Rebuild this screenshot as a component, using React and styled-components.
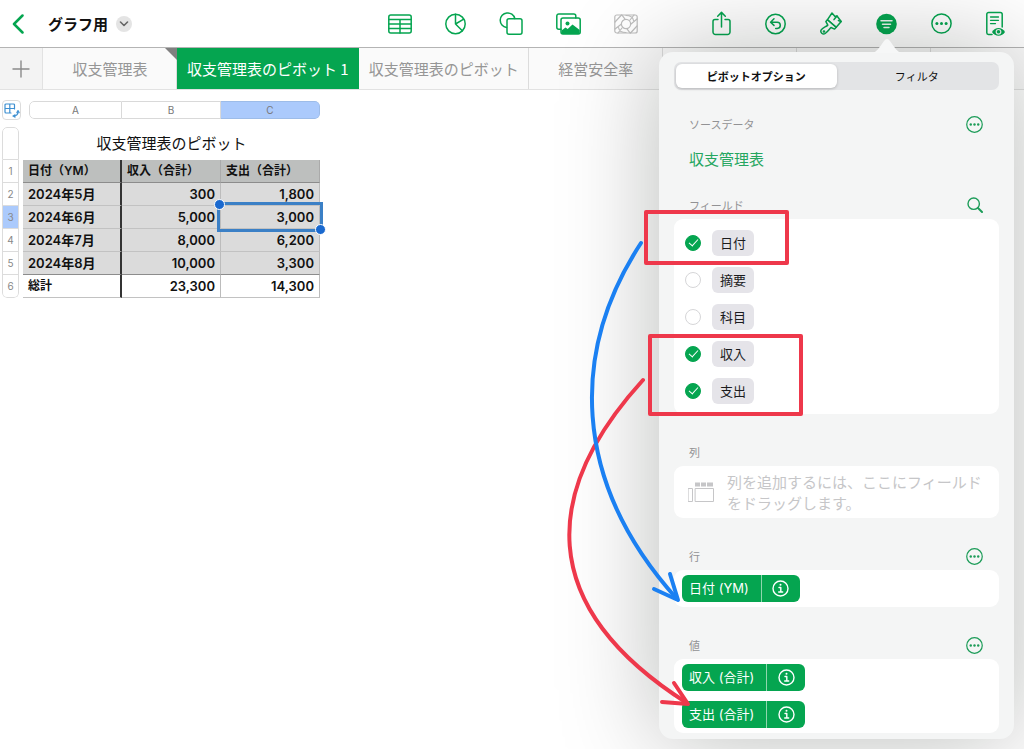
import { useState } from "react";
import styled, { createGlobalStyle } from "styled-components";

const GREEN = "#05a550";

const tabs = [
  { label: "収支管理表", flag: true },
  { label: "収支管理表のピボット 1", active: true },
  { label: "収支管理表のピボット" },
  { label: "経営安全率" },
  { label: "" },
  { label: "" },
  { label: "" },
];

const rows = [
  ["2024年5月", "300", "1,800"],
  ["2024年6月", "5,000", "3,000"],
  ["2024年7月", "8,000", "6,200"],
  ["2024年8月", "10,000", "3,300"],
];

const initialFields = [
  { name: "日付", checked: true },
  { name: "摘要", checked: false },
  { name: "科目", checked: false },
  { name: "収入", checked: true },
  { name: "支出", checked: true },
];

const Svg = ({ w, h, children, ...rest }) => (
  <svg
    width={w}
    height={h}
    viewBox={`0 0 ${w} ${h}`}
    fill="none"
    stroke="currentColor"
    strokeWidth="1.5"
    strokeLinecap="round"
    strokeLinejoin="round"
    aria-hidden="true"
    {...rest}
  >
    {children}
  </svg>
);

const TableIcon = () => (
  <Svg w={24} h={24}>
    <rect x="0.8" y="3" width="22.4" height="18" rx="2" />
    <path d="M1 7.5h22M1 12h22M1 16.5h22M12 7.5V21" />
  </Svg>
);

const PieIcon = () => (
  <Svg w={21} h={24}>
    <circle cx="10.5" cy="12" r="9.7" />
    <path d="M10.5 2.3V12l8.2-4.8M10.5 12l6.8 6.8" />
  </Svg>
);

const ShapeIcon = () => (
  <Svg w={24} h={26}>
    <path d="M7.5 16.6A7.4 7.4 0 1 1 15.800 7.5" />
    <rect x="8" y="7.8" width="15" height="15.500" rx="2" />
  </Svg>
);

const PhotoIcon = () => (
  <Svg w={25} h={24}>
    <path d="M5 17.2H2.8a2 2 0 0 1-2-2V4a2 2 0 0 1 2-2h15a2 2 0 0 1 2 2v2" />
    <rect x="5" y="6" width="19.2" height="16" rx="2" />
    <circle cx="11.5" cy="11.5" r="2" fill="currentColor" stroke="none" />
    <path
      d="M5.5 18.5l4-3 2.200 1.600 4.800-4.600 7.200 5.500V21a1 1 0 0 1-1 1H6.500a1 1 0 0 1-1-1z"
      fill="currentColor"
      stroke="none"
    />
  </Svg>
);

const MediaIcon = () => (
  <Svg w={24} h={24} strokeWidth="1.2">
    <rect x="0.8" y="3" width="22.4" height="18" rx="2" />
    <circle cx="12" cy="12" r="4.6" />
    <path d="M1 10l6.500-7M1 17l6.500-5M4 21l4-5M16 8l4-5M17 12l6-5M16.500 21l6.500-7M12 20.500c-4 0-7-2-7.500-5M12 3.500c4 0 7 2 7.500 5M8 3.200l3 4M16 20.800l-3-4" />
  </Svg>
);

const ShareIcon = () => (
  <Svg w={19} h={26}>
    <path d="M6 8.500H3a2 2 0 0 0-2 2V21a2.500 2.500 0 0 0 2.500 2.500h12A2.500 2.500 0 0 0 18 21V10.500a2 2 0 0 0-2-2h-3" />
    <path d="M9.500 16V1.500M5.700 5.200l3.800-3.800 3.800 3.800" />
  </Svg>
);

const UndoIcon = () => (
  <Svg w={21} h={24}>
    <circle cx="10.5" cy="12" r="9.700" />
    <path d="M9 6.800L5.600 10.200 9 13.400M5.800 10.200h6.400a3 3 0 0 1 0 6.200h-1.500" />
  </Svg>
);

const BrushIcon = () => (
  <Svg w={22} h={26}>
    <path d="M12 2l3 3.500L17 5l4.200 5.500-5 5.800-8.700-7.600z" />
    <path d="M7.500 8.700l8.700 7.600-1.600 1.800-3.600-1.600c-1.800 1.800-3.200 4.200-5.800 6-2.400 1.600-5.400-1.200-4-3.600 1.500-2.500 4.800-3 6.600-4.800L5.900 10.600z" />
    <circle cx="4" cy="20.500" r="0.600" />
    <path d="M17 5l-3 3.600M21 10.500l-2.600-1" />
  </Svg>
);

const FilterIcon = () => (
  <Svg w={21} h={24}>
    <circle cx="10.5" cy="12" r="10.300" fill="currentColor" stroke="none" />
    <path d="M5 8.800h11M6.500 12.200h8M8 15.600h5" stroke="#eef5f0" />
  </Svg>
);

const MoreIcon = ({ size = 21 }) => (
  <Svg w={21} h={21} width={size} height={size}>
    <circle cx="10.5" cy="10.5" r="9.600" />
    <g fill="currentColor" stroke="none">
      <circle cx="5.900" cy="10.5" r="1.500" />
      <circle cx="10.5" cy="10.5" r="1.500" />
      <circle cx="15.100" cy="10.5" r="1.500" />
    </g>
  </Svg>
);

const ReadIcon = () => (
  <Svg w={19} h={26}>
    <path d="M6 23.500H2.500A1.800 1.800 0 0 1 .8 21.700V3.300a1.800 1.800 0 0 1 1.800-1.800h11.800a1.800 1.800 0 0 1 1.800 1.800V16" />
    <path d="M4.500 6h8M4.500 9.300h8M4.500 12.600h5" strokeWidth="1.300" />
    <path
      d="M6 21c3-5.500 10-5.500 13 0-3 5-10 5-13 0z"
      fill="currentColor"
      stroke="none"
    />
    <circle cx="12.500" cy="20.800" r="2.300" stroke="#e8efea" strokeWidth="1.200" />
  </Svg>
);

const SearchIcon = () => (
  <Svg w={16} h={16} strokeWidth="1.400">
    <circle cx="6.700" cy="6.700" r="5.700" />
    <path d="M11 11l4 4" strokeWidth="2" />
  </Svg>
);

const InfoIcon = () => (
  <Svg w={17} h={17} strokeWidth="1.400">
    <circle cx="8.5" cy="8.5" r="7.500" />
    <path d="M7 7.500h1.800v4.300M6.700 12h4" />
    <circle cx="8.500" cy="4.800" r="1" fill="currentColor" stroke="none" />
  </Svg>
);

const DropIcon = () => (
  <Svg w={26} h={22} strokeWidth="1">
    <rect x="0.5" y="7.5" width="4" height="13" />
    <rect x="7.5" y="7.5" width="18" height="13" />
    <path d="M7 3.500h5M13 3.500h5M19 3.500h6" strokeWidth="4" strokeLinecap="butt" />
  </Svg>
);

function FieldPill({ label }) {
  return (
    <Pill>
      <PillName type="button">{label}</PillName>
      <PillInfo type="button" aria-label={`${label} の情報`}>
        <InfoIcon />
      </PillInfo>
    </Pill>
  );
}

function Annotations() {
  return (
    <Overlay width="260" height="687" viewBox="559 52 260 687" aria-hidden="true">
      <g stroke="#ee384b">
        <rect x="646" y="212" width="141" height="51" />
        <rect x="650" y="336" width="151" height="78" />
        <path d="M643 380C543 490 533 605 687 703" />
        <path d="M674 683l14 21-26-2" />
      </g>
      <g stroke="#1b80f2">
        <path d="M641 243C571 350 570 480 677 599" />
        <path d="M670 574l8 26-24-11" />
      </g>
    </Overlay>
  );
}

function PivotPanel() {
  const [fields, setFields] = useState(initialFields);

  const toggle = (name) =>
    setFields(
      fields.map((f) => (f.name === name ? { ...f, checked: !f.checked } : f))
    );

  return (
    <Panel>
      <PanelArrow width="30" height="15" viewBox="0 0 30 15" aria-hidden="true">
        <path d="M0 15C5 14 7 10 12 3q3-4 6 0c5 7 7 11 12 12z" fill="#f6f7f7" />
      </PanelArrow>
      <Segmented>
        <Segment type="button" $active>
          ピボットオプション
        </Segment>
        <Segment type="button">フィルタ</Segment>
      </Segmented>

      <Section $gap={20}>
        <SectionHead>
          <h2>ソースデータ</h2>
          <IconButton aria-label="ソースデータのオプション">
            <MoreIcon size={17} />
          </IconButton>
        </SectionHead>
        <SourceLink href="#source">収支管理表</SourceLink>
      </Section>

      <Section $gap={11}>
        <SectionHead>
          <h2>フィールド</h2>
          <IconButton aria-label="フィールドを検索">
            <SearchIcon />
          </IconButton>
        </SectionHead>
        <Card $pad="5px 11px">
          {fields.map((f) => (
            <FieldRow key={f.name}>
              <Check
                type="checkbox"
                checked={f.checked}
                onChange={() => toggle(f.name)}
              />
              <FieldName>{f.name}</FieldName>
            </FieldRow>
          ))}
        </Card>
      </Section>

      <Section $gap={24}>
        <SectionHead>
          <h2>列</h2>
        </SectionHead>
        <Card $pad="5px 14px">
          <DropHint>
            <DropIcon />
            <p>列を追加するには、ここにフィールドをドラッグします。</p>
          </DropHint>
        </Card>
      </Section>

      <Section $gap={24}>
        <SectionHead>
          <h2>行</h2>
          <IconButton aria-label="行のオプション">
            <MoreIcon size={17} />
          </IconButton>
        </SectionHead>
        <Card $pad="0 8px">
          <FieldPill label="日付 (YM)" />
        </Card>
      </Section>

      <Section $gap={24}>
        <SectionHead>
          <h2>値</h2>
          <IconButton aria-label="値のオプション">
            <MoreIcon size={17} />
          </IconButton>
        </SectionHead>
        <Card $pad="0 8px">
          <FieldPill label="収入 (合計)" />
          <FieldPill label="支出 (合計)" />
        </Card>
      </Section>
      <Annotations />
    </Panel>
  );
}

function Sheet() {
  return (
    <SheetArea>
      <SheetTop>
        <CornerButton aria-label="表の操作">
          <Svg w={17} h={17} strokeWidth="1.200">
            <path d="M11.500 7V3a1 1 0 0 0-1-1H3a1 1 0 0 0-1 1V10a1 1 0 0 0 1 1H8M2 6.500H11.500M6.800 2v9" />
            <path d="M15 9.500c0 3-1.500 4.500-4.500 4.500" />
            <path d="M13.500 10.500l1.500-2.500 1.500 2.500zM12 12.500L9.500 14l2.500 1.500z" fill="currentColor" strokeWidth="0.500" />
          </Svg>
        </CornerButton>
        <ColumnBar>
          <BarCell>A</BarCell>
          <BarCell>B</BarCell>
          <BarCell $selected>C</BarCell>
        </ColumnBar>
      </SheetTop>
      <SheetBody>
        <RowBar>
          <BarCell />
          {[1, 2, 3, 4, 5, 6].map((n) => (
            <BarCell key={n} $selected={n === 3}>
              {n}
            </BarCell>
          ))}
        </RowBar>
        <PivotTable>
          <caption>収支管理表のピボット</caption>
          <colgroup>
            <col width="99" />
            <col width="99" />
            <col width="99" />
          </colgroup>
          <thead>
            <tr>
              <th scope="col">日付（YM）</th>
              <th scope="col">収入（合計）</th>
              <th scope="col">支出（合計）</th>
            </tr>
          </thead>
          <tbody>
            {rows.map(([month, income, expense], i) => (
              <tr key={month}>
                <th scope="row">{month}</th>
                <td>{income}</td>
                <Cell $selected={i === 1}>
                  {expense}
                  {i === 1 && <Selection />}
                </Cell>
              </tr>
            ))}
          </tbody>
          <tfoot>
            <tr>
              <th scope="row">総計</th>
              <td>23,300</td>
              <td>14,300</td>
            </tr>
          </tfoot>
        </PivotTable>
      </SheetBody>
    </SheetArea>
  );
}

export default function App() {
  return (
    <Page>
      <GlobalStyle />
      <Toolbar>
        <TitleGroup>
          <IconButton aria-label="戻る">
            <Svg w={12} h={20} strokeWidth="2.500">
              <path d="M10.500 1.500L2 10l8.500 8.500" />
            </Svg>
          </IconButton>
          <h1>グラフ用</h1>
          <TitleMenu aria-label="書類メニュー">
            <Svg w={10} h={6} strokeWidth="1.600">
              <path d="M1.500 1L5 4.500 8.500 1" />
            </Svg>
          </TitleMenu>
        </TitleGroup>
        <Tools $gap={33}>
          <IconButton aria-label="表"><TableIcon /></IconButton>
          <IconButton aria-label="グラフ"><PieIcon /></IconButton>
          <IconButton aria-label="図形"><ShapeIcon /></IconButton>
          <IconButton aria-label="写真"><PhotoIcon /></IconButton>
          <IconButton aria-label="メディア" disabled><MediaIcon /></IconButton>
        </Tools>
        <Tools $gap={34}>
          <IconButton aria-label="共有"><ShareIcon /></IconButton>
          <IconButton aria-label="取り消す"><UndoIcon /></IconButton>
          <IconButton aria-label="フォーマット"><BrushIcon /></IconButton>
          <IconButton aria-label="整理"><FilterIcon /></IconButton>
          <IconButton aria-label="その他"><MoreIcon /></IconButton>
          <IconButton aria-label="閲覧表示"><ReadIcon /></IconButton>
        </Tools>
      </Toolbar>
      <TabBar>
        <AddTab aria-label="シートを追加">
          <Svg w={18} h={18} strokeWidth="1.400">
            <path d="M9 1v16M1 9h16" />
          </Svg>
        </AddTab>
        {tabs.map((tab, i) => (
          <Tab key={i} $active={tab.active} $flag={tab.flag}>
            {tab.label}
          </Tab>
        ))}
      </TabBar>
      <Sheet />
      <PivotPanel />
    </Page>
  );
}

const GlobalStyle = createGlobalStyle`
  * {
    box-sizing: border-box;
  }

  body {
    margin: 0;
    background: #fff;
    color: #111;
    font-family: "Noto Sans CJK JP", sans-serif;
  }

  h1, h2, p {
    margin: 0;
  }

  button {
    padding: 0;
    border: 0;
    background: none;
    color: inherit;
    font: inherit;
  }

  svg {
    display: block;
  }
`;

const Page = styled.div`
  position: relative;
  min-height: 100vh;
  overflow: hidden;
`;

const Toolbar = styled.header`
  display: flex;
  align-items: center;
  gap: 74px;
  height: 48px;
  padding: 0 19px 0 12px;
  border-bottom: 1px solid #b4b4b4;
`;

const TitleGroup = styled.div`
  flex: 1;
  display: flex;
  align-items: center;

  h1 {
    margin: 0 8px 0 24px;
    font-size: 15px;
    line-height: 24px;
    white-space: nowrap;
  }
`;

const TitleMenu = styled.button`
  display: grid;
  place-items: center;
  width: 16px;
  height: 16px;
  border-radius: 50%;
  background: #e4e4e4;
  color: #666;
`;

const Tools = styled.div`
  display: flex;
  align-items: center;
  gap: ${({ $gap }) => $gap}px;
`;

const IconButton = styled.button`
  color: ${GREEN};

  &:disabled {
    color: #bdbdbd;
  }
`;

const TabBar = styled.nav`
  display: flex;
  height: 42px;
  border-bottom: 1px solid #e2e2e2;
  background: #fafafa;
`;

const AddTab = styled.button`
  display: grid;
  place-items: center;
  flex: none;
  width: 43px;
  border-right: 1px solid #e2e2e2;
  background: #f3f3f3;
  color: #8a8a8a;
`;

const Tab = styled.button`
  position: relative;
  flex: none;
  min-width: 134px;
  padding: 0 9px 0 10px;
  border-right: 1px solid ${({ $active }) => ($active ? GREEN : "#dcdcdc")};
  background: ${({ $active }) => ($active ? GREEN : "transparent")};
  color: ${({ $active }) => ($active ? "#fff" : "#969696")};
  font-size: 15px;
  white-space: nowrap;

  &::after {
    content: "";
    display: ${({ $flag }) => ($flag ? "block" : "none")};
    position: absolute;
    top: 0;
    right: -1px;
    border-top: 12px solid #808080;
    border-left: 12px solid transparent;
  }
`;

const SheetArea = styled.main`
  padding: 10px 2px;
`;

const SheetTop = styled.div`
  display: flex;
  align-items: center;
  gap: 8px;
`;

const CornerButton = styled.button`
  display: grid;
  place-items: center;
  width: 19px;
  height: 20px;
  border: 1px solid #dcdcdc;
  border-radius: 4px;
  color: #3d8fd1;
`;

const BarCell = styled.span`
  display: grid;
  place-items: center;
  background: ${({ $selected }) => ($selected ? "#abcafc" : "#fff")};
`;

const ColumnBar = styled.div`
  display: grid;
  grid-template-columns: 93px 99px 99px;
  height: 18px;
  border-radius: 5px;
  color: #777;
  font: 10px "Inter", sans-serif;
  overflow: hidden;

  ${BarCell} {
    border: 1px solid #d9d9d9;
    border-left-width: 0;
  }

  ${BarCell}:first-child {
    border-left-width: 1px;
    border-radius: 5px 0 0 5px;
  }

  ${BarCell}:last-child {
    border-color: #9dbce8;
    border-radius: 0 5px 5px 0;
  }
`;

const SheetBody = styled.div`
  display: flex;
  gap: 4px;
  margin-top: 7px;
`;

const RowBar = styled.div`
  display: grid;
  grid-template-rows: 33px repeat(6, 23px);
  width: 17px;
  border-radius: 5px;
  color: #888;
  font: 10px "Inter", sans-serif;
  overflow: hidden;

  ${BarCell} {
    border: 1px solid #dcdcdc;
    border-top-width: 0;
  }

  ${BarCell}:first-child {
    border-top-width: 1px;
    border-radius: 5px 5px 0 0;
  }

  ${BarCell}:last-child {
    border-radius: 0 0 5px 5px;
  }
`;

const PivotTable = styled.table`
  width: 297px;
  table-layout: fixed;
  border-collapse: separate;
  border-spacing: 0;
  font-family: "Inter", "Noto Sans CJK JP", sans-serif;
  font-size: 13px;
  font-weight: 600;

  caption {
    height: 33px;
    font-size: 15px;
    font-weight: 400;
    line-height: 34px;
  }

  th,
  td {
    height: 23px;
    padding: 0 5px;
    border-right: 1px solid #bcbcbc;
    border-bottom: 1px solid #c2c2c2;
    background: #dbdbdb;
    font-weight: inherit;
    line-height: 22px;
    text-align: right;
    white-space: nowrap;
  }

  th {
    text-align: left;
  }

  th:first-child {
    border-right: 2px solid #333;
  }

  thead th {
    border-bottom-color: #8c8c8c;
    border-right-color: #aaa;
    background: #bdbfbe;
    font-size: 12px;
  }

  tbody tr:last-child > * {
    border-bottom-color: #8c8c8c;
  }

  tfoot th,
  tfoot td {
    background: #fff;
  }

  tfoot th {
    font-size: 12px;
  }
`;

const Cell = styled.td`
  position: relative;
  z-index: ${({ $selected }) => ($selected ? 1 : 0)};
`;

const Selection = styled.span`
  position: absolute;
  inset: -4px -4px -4px;
  border: 3px solid #3b80c6;

  &::before,
  &::after {
    content: "";
    position: absolute;
    width: 9px;
    height: 9px;
    border: 1px solid #fff;
    border-radius: 50%;
    background: #1a69cf;
  }

  &::before {
    top: -6px;
    left: -6px;
  }

  &::after {
    right: -6px;
    bottom: -6px;
  }
`;

const Panel = styled.aside`
  position: absolute;
  top: 52px;
  right: 10px;
  width: 355px;
  padding: 10px 15px 6px;
  border-radius: 14px;
  background: #f4f5f5;
  box-shadow: 0 0 100px rgba(0, 10, 5, 0.28);
`;

const PanelArrow = styled.svg`
  position: absolute;
  top: -14px;
  right: 112px;
`;

const Segmented = styled.div`
  display: grid;
  grid-template-columns: 1fr 1fr;
  height: 28px;
  padding: 2px;
  border-radius: 7px;
  background: #e3e4e6;
`;

const Segment = styled.button`
  border-radius: 6px;
  background: ${({ $active }) => ($active ? "#fff" : "transparent")};
  box-shadow: ${({ $active }) =>
    $active ? "0 1px 3px rgba(0, 0, 0, 0.2)" : "none"};
  font-size: 11px;
  font-weight: ${({ $active }) => ($active ? 700 : 400)};
  line-height: 24px;
`;

const Section = styled.section`
  margin-top: ${({ $gap }) => $gap}px;
`;

const SectionHead = styled.div`
  display: flex;
  align-items: center;
  justify-content: space-between;
  height: 28px;
  padding: 0 16px 0 15px;

  h2 {
    color: #929294;
    font-size: 11px;
    font-weight: 400;
  }

  button {
    color: #1c9c58;
  }
`;

const SourceLink = styled.a`
  display: block;
  padding: 0 15px;
  color: #25a660;
  font-size: 15px;
  line-height: 42px;
  text-decoration: none;
`;

const Card = styled.div`
  padding: ${({ $pad }) => $pad};
  border-radius: 9px;
  background: #fff;
`;

const FieldRow = styled.label`
  display: flex;
  align-items: center;
  gap: 11px;
  height: 37px;
`;

const Check = styled.input`
  appearance: none;
  display: grid;
  place-items: center;
  width: 16px;
  height: 16px;
  margin: 0;
  border: 1px solid #d6d6d8;
  border-radius: 50%;

  &:checked {
    border-color: ${GREEN};
    background: ${GREEN};
  }

  &:checked::after {
    content: "";
    width: 4px;
    height: 8px;
    margin-bottom: 2px;
    border: solid #fff;
    border-width: 0 1px 1px 0;
    transform: rotate(42deg);
  }
`;

const FieldName = styled.span`
  padding: 0 8px;
  border-radius: 6px;
  background: #e5e4e9;
  color: #1c1c1e;
  font-size: 13px;
  line-height: 26px;
`;

const DropHint = styled.div`
  display: flex;
  align-items: center;
  gap: 13px;
  color: #c6c6c8;

  svg {
    flex: none;
  }

  p {
    font-size: 15px;
    line-height: 21px;
  }
`;

const Pill = styled.div`
  display: flex;
  width: max-content;
  padding: 5px 0;
  color: #fff;
  font-family: "Inter", "Noto Sans CJK JP", sans-serif;
  font-size: 13px;
  line-height: 27px;
`;

const PillName = styled.button`
  padding: 0 12px 0 7px;
  border-radius: 6px 0 0 6px;
  background: ${GREEN};
`;

const PillInfo = styled.button`
  display: grid;
  place-items: center;
  width: 39px;
  border-left: 1px solid #8fd6ae;
  border-radius: 0 6px 6px 0;
  background: ${GREEN};
`;

const Overlay = styled.svg`
  position: absolute;
  top: 0;
  left: -100px;
  fill: none;
  stroke-width: 4;
  stroke-linecap: round;
  stroke-linejoin: round;
  pointer-events: none;
`;
